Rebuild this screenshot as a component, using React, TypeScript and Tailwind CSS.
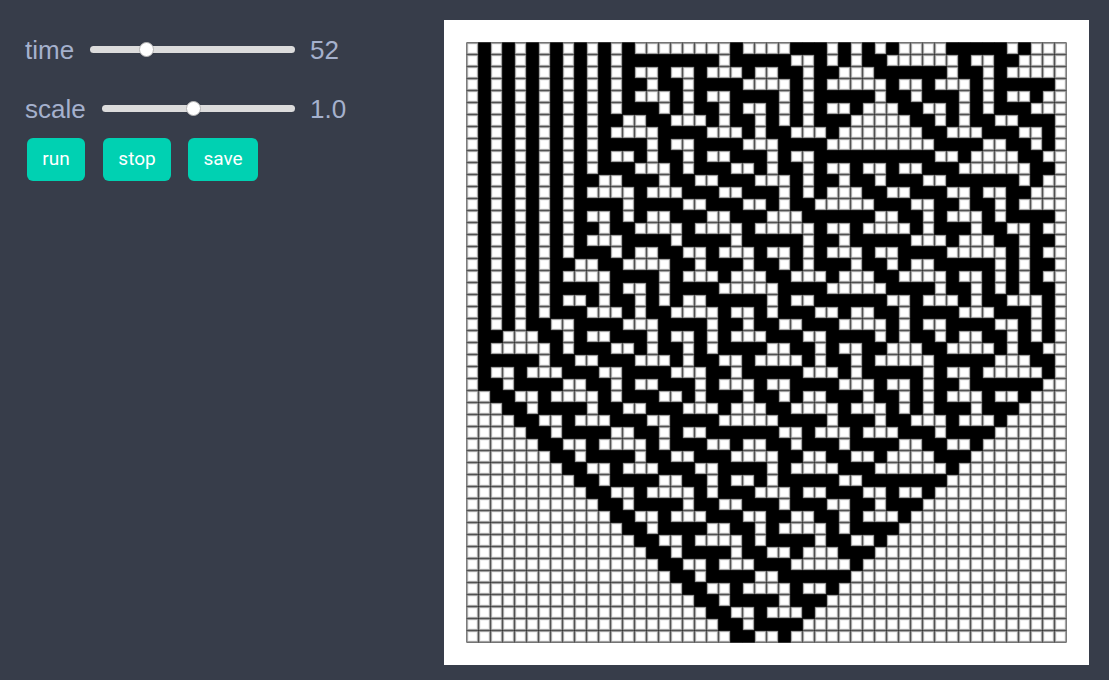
import React from "react";

const SIZE = 50;
const CELL = 12;
const FIRST_STEP = 2;

function evolve(row: number[]): number[] {
  return row.map((c, i) =>
    i === 0 || i === SIZE - 1 ? 0 : row[i - 1] ^ (c | row[i + 1]),
  );
}

function buildRows(): number[][] {
  let row: number[] = Array.from({ length: SIZE }, (_, i) => (i === 24 ? 1 : 0));
  for (let t = 0; t < FIRST_STEP; t++) row = evolve(row);
  const rows: number[][] = [];
  for (let t = 0; t < SIZE; t++) {
    rows.unshift(row);
    row = evolve(row);
  }
  return rows;
}

const ROWS = buildRows();
const LINES = Array.from({ length: SIZE + 1 }, (_, i) => i * CELL);
const GRID = LINES.map((p) => `M${p} 0V600M0 ${p}H600`).join("");
const CELLS = ROWS.map((row, y) =>
  row.map((on, x) => (on ? `M${x * CELL - 0.2} ${y * CELL - 0.2}h12.4v12.4h-12.4z` : "")).join(""),
).join("");

function Automaton() {
  return (
    <svg width="602" height="602" viewBox="-0.5 -0.5 602 602" className="block">
      <clipPath id="frame">
        <rect x="-0.2" y="-0.2" width="600.4" height="600.4" />
      </clipPath>
      <g clipPath="url(#frame)">
        <path d={GRID} stroke="#000" strokeOpacity="0.07" strokeWidth="4.6" />
        <path d={GRID} stroke="#000" strokeOpacity="0.42" strokeWidth="2.4" />
        <path d={GRID} stroke="#000" strokeOpacity="0.4" strokeWidth="1" />
        <path d={CELLS} />
      </g>
    </svg>
  );
}

function Slider({ label, value, trackClass, thumbClass }: { label: string; value: string; trackClass: string; thumbClass: string }) {
  return (
    <div className="flex h-[30px] items-center text-[26px] leading-[30px] text-[#a5b1cd]">
      <span>{label}</span>
      <div className={`mb-px ml-auto flex items-center rounded-full bg-[#dcdcdc] ${trackClass}`}>
        <div className={`size-[15px] shrink-0 rounded-full border border-[#b4b4b4] bg-white ${thumbClass}`} />
      </div>
      <span className="ml-[15px] w-[50px]">{value}</span>
    </div>
  );
}

function Button({ children, className }: { children: string; className: string }) {
  return (
    <button className={`h-[43px] rounded-[6px] bg-[#00d1b2] font-[Roboto,sans-serif] text-[19px] text-white ${className}`}>
      {children}
    </button>
  );
}

export default function App() {
  return (
    <div className="flex h-[680px] w-[1109px] overflow-hidden bg-[#373d4a] font-['Liberation_Sans',sans-serif]">
      <div className="w-[444px] pt-[35px] pl-[25px]">
        <div className="flex w-[335px] flex-col gap-[29px]">
          <Slider label="time" value="52" trackClass="h-[7px] w-[205px]" thumbClass="ml-[49px]" />
          <Slider label="scale" value="1.0" trackClass="h-[7px] w-[193px]" thumbClass="ml-[84px]" />
        </div>
        <div className="mt-[14px] ml-[2px] flex">
          <Button className="w-[58px]">run</Button>
          <Button className="ml-[18px] w-[68px]">stop</Button>
          <Button className="ml-[17px] w-[70px]">save</Button>
        </div>
      </div>
      <div className="mt-5 h-[645px] w-[645px] bg-white pt-[22px] pl-[22px]">
        <Automaton />
      </div>
    </div>
  );
}
